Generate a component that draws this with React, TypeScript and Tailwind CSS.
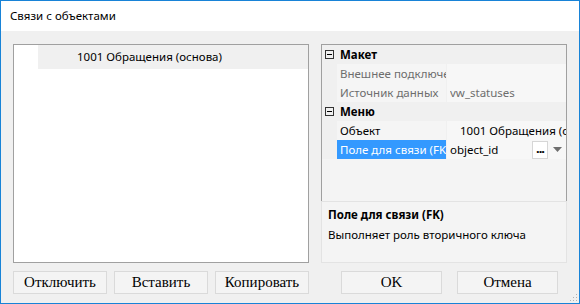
import React from 'react';

const UI = { fontFamily: '"Noto Sans", "Open Sans", sans-serif' };
const SERIF = { fontFamily: '"Liberation Serif", "Times New Roman", serif' };

const Collapse = () => (
    <svg width="9" height="9" viewBox="0 0 9 9" className="block">
        <rect x="0.5" y="0.5" width="8" height="8" fill="none" stroke="#333" />
        <line x1="2" y1="4.5" x2="7" y2="4.5" stroke="#000" />
    </svg>
);

const Category = ({ title }: { title: string }) => (
    <div className="flex h-[19px] items-center bg-[#f0f0f0]">
        <div className="flex w-[15px] justify-center">
            <Collapse />
        </div>
        <span className="pl-[3px] text-[11.5px] font-bold text-black">{title}</span>
    </div>
);

const Prop = ({ label, value, muted, selected, indent, children }: {
    label: string; value: string; muted?: boolean; selected?: boolean; indent?: boolean; children?: React.ReactNode;
}) => (
    <div className="flex h-[19px] bg-[#f0f0f0]">
        <div className="w-[15px]" />
        <div className={`flex w-[109px] items-center overflow-hidden whitespace-nowrap pl-[3px] text-[11.5px] ${selected ? 'bg-[#3399ff] text-white' : muted ? 'bg-[#f5f5f5] text-[#6d6d6d]' : 'bg-[#f5f5f5] text-black'}`}>
            {label}
        </div>
        <div className={`ml-px flex flex-1 items-center overflow-hidden whitespace-nowrap bg-[#f7f7f7] text-[11.5px] ${indent ? 'pl-[13px]' : 'pl-[3px]'} ${muted ? 'text-[#6d6d6d]' : 'text-black'}`}>
            <span className="flex-1 overflow-hidden">{value}</span>
            {children}
        </div>
    </div>
);

const Btn = ({ children, className = '' }: { children: React.ReactNode; className?: string }) => (
    <button className={`h-[23px] border border-[#dadada] bg-[#f4f4f4] text-[15px] leading-none text-black ${className}`} style={SERIF}>
        {children}
    </button>
);

export default function App() {
    return (
        <div className="flex h-[304px] w-[580px] flex-col border border-[#1883d7] bg-[#f0f0f0]" style={UI}>
            {/* Title bar */}
            <div className="flex h-[30px] items-center bg-white pl-[9px] text-[11.5px] text-black">
                Связи с объектами
            </div>

            <div className="flex flex-1 gap-[12px] px-[12px] pt-[13px]">
                {/* Left: tree + buttons */}
                <div className="flex w-[296px] flex-col">
                    <div className="h-[219px] border border-[#a0a0a0] bg-white">
                        <div className="ml-[24px] flex h-[24px] items-center bg-[#f0f0f0] pl-[39px] text-[11.5px] text-black">
                            1001 Обращения (основа)
                        </div>
                    </div>
                    <div className="mt-[8px] grid grid-cols-3 gap-[7px]">
                        <Btn>Отключить</Btn>
                        <Btn>Вставить</Btn>
                        <Btn>Копировать</Btn>
                    </div>
                </div>

                {/* Right: property grid + description + buttons */}
                <div className="flex w-[246px] flex-col">
                    <div className="flex h-[219px] flex-col">
                        <div className="h-[157px] border border-b-0 border-[#a0a0a0] bg-[#f4f4f4]">
                            <Category title="Макет" />
                            <Prop label="Внешнее подключение" value="" muted />
                            <Prop label="Источник данных" value="vw_statuses" muted />
                            <Category title="Меню" />
                            <Prop label="Объект" value="1001 Обращения (основа)" indent />
                            <Prop label="Поле для связи (FK)" value="object_id" selected>
                                <span className="flex h-[18px] w-[16px] items-end justify-center border border-[#d6d6d6] bg-white pb-[3px] text-[13px] font-bold leading-none tracking-[-1px]">...</span>
                                <span className="flex w-[18px] justify-center">
                                    <svg width="9" height="5" viewBox="0 0 9 5"><path d="M0 0h9L4.5 5z" fill="#6e6e6e" /></svg>
                                </span>
                            </Prop>
                        </div>
                        <div className="flex-1 border border-[#e3e3e3] bg-[#f4f4f4] px-[6px] pt-[3px] text-[11.5px] text-black">
                            <div className="font-bold leading-[20px]">Поле для связи (FK)</div>
                            <div className="leading-[20px]">Выполняет роль вторичного ключа</div>
                        </div>
                    </div>
                    <div className="mt-[8px] flex gap-[15px] pl-[20px]">
                        <Btn className="w-[101px]">OK</Btn>
                        <Btn className="w-[101px]">Отмена</Btn>
                    </div>
                </div>
            </div>

            {/* Resize grip */}
            <svg width="10" height="10" viewBox="0 0 10 10" className="absolute left-[568px] top-[292px]">
                {[[8, 8], [8, 5], [5, 8], [8, 2], [5, 5], [2, 8]].map(([x, y], i) => (
                    <rect key={i} x={x} y={y} width="1" height="1" fill="#b0b0b0" />
                ))}
            </svg>
        </div>
    );
}
